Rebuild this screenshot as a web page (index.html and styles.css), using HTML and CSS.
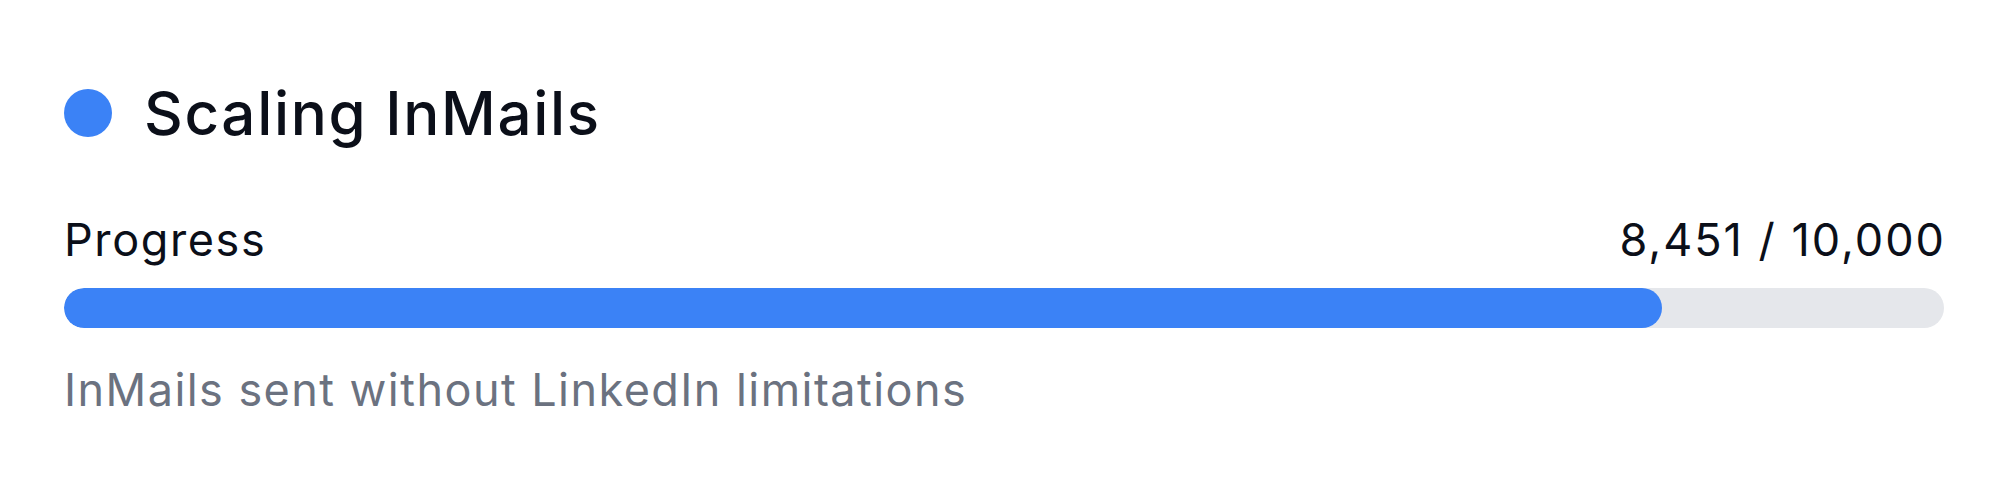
FILE: index.html
```html
<!DOCTYPE html>
<html lang="en">
<head>
<meta charset="utf-8">
<title>Scaling InMails</title>
<link rel="stylesheet" href="styles.css">
</head>
<body>
<section class="card">
  <header class="card-header">
    <span class="dot"></span>
    <h2 class="title">Scaling InMails</h2>
  </header>
  <div class="progress-row">
    <span class="label">Progress</span>
    <span class="value">8,451 / 10,000</span>
  </div>
  <div class="track">
    <div class="fill" style="width: 85%"></div>
  </div>
  <p class="desc">InMails sent without LinkedIn limitations</p>
</section>
</body>
</html>
```
FILE: styles.css
```css
html, body {
  margin: 0;
  padding: 0;
  background: #ffffff;
}
body {
  font-family: Inter, "Noto Sans", "Liberation Sans", sans-serif;
  color: #0b0f19;
}
.card {
  padding: 77px 64px 0 64px;
}
.card-header {
  display: flex;
  align-items: center;
  gap: 32px;
}
.dot {
  width: 48px;
  height: 48px;
  border-radius: 50%;
  background: #3b82f6;
  flex-shrink: 0;
}
.title {
  margin: 0;
  font-size: 60px;
  line-height: 72px;
  font-weight: 500;
  letter-spacing: 1.7px;
  color: #0b0f19;
}
.progress-row {
  margin-top: 64px;
  display: flex;
  justify-content: space-between;
  font-size: 45px;
  line-height: 54px;
  color: #0b0f19;
}
.label {
  letter-spacing: 1.6px;
}
.value {
  letter-spacing: 2px;
  margin-right: -2px;
}
.track {
  margin-top: 21px;
  height: 40px;
  border-radius: 20px;
  background: #e5e7eb;
  overflow: hidden;
}
.fill {
  height: 100%;
  border-radius: 20px;
  background: #3b82f6;
}
.desc {
  margin: 35px 0 0 0;
  font-size: 45px;
  line-height: 54px;
  letter-spacing: 1.45px;
  color: #6b7280;
}
```
